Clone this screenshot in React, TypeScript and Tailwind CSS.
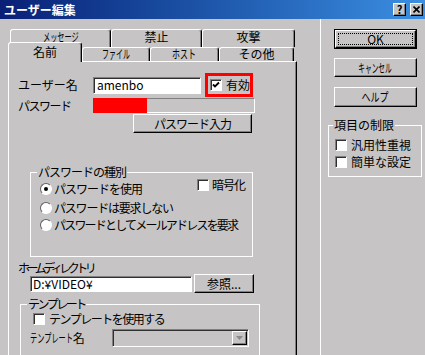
import React from 'react';

const raised =
  'border border-t-white border-l-white border-r-black border-b-black shadow-[inset_-1px_-1px_0_#808080] bg-[#c6c4c4]';
const sunken =
  'border border-t-[#808080] border-l-[#808080] border-r-white border-b-white shadow-[inset_1px_1px_0_#303030]';

// 半角カナ風の細い文字
const Narrow = ({ children, className = '' }: { children: React.ReactNode; className?: string }) => (
  <span className={`inline-block whitespace-nowrap ${className}`}>{children}</span>
);

const CheckBox = ({ checked = false }: { checked?: boolean }) => (
  <span className={`w-[12px] h-[12px] shrink-0 bg-white flex items-center justify-center ${sunken}`}>
    {checked && (
      <svg width="8" height="8" viewBox="0 0 8 8">
        <path d="M1 3.5 L3 5.5 L7 1.5" stroke="#000" strokeWidth="1.8" fill="none" />
      </svg>
    )}
  </span>
);

const Radio = ({ on = false }: { on?: boolean }) => (
  <span className="w-[12px] h-[12px] shrink-0 rounded-full bg-white border border-t-[#606060] border-l-[#606060] border-r-white border-b-white flex items-center justify-center">
    {on && <span className="w-[4px] h-[4px] rounded-full bg-black" />}
  </span>
);

const BackTab = ({ w, children }: { w: string; children: React.ReactNode }) => (
  <div
    className={`${w} h-[18px] bg-[#c6c4c4] border-t border-l border-r border-t-white border-l-white border-r-black rounded-t-[3px] shadow-[inset_-1px_0_0_#808080] flex justify-center`}
  >
    {children}
  </div>
);

const FrontTab = ({ w, children }: { w: string; children: React.ReactNode }) => (
  <div
    className={`${w} h-[14px] bg-[#c6c4c4] border-t border-l border-r border-t-white border-l-white border-r-black rounded-t-[3px] shadow-[inset_-1px_0_0_#808080] flex justify-center leading-[12px]`}
  >
    {children}
  </div>
);

export default function App() {
  return (
    <div className="w-[425px] h-[355px] overflow-hidden bg-[#c6c4c4] font-['Noto_Sans_CJK_JP',sans-serif] text-[12px] leading-[14px] text-black flex flex-col">
      {/* タイトルバー */}
      <div className="h-[19px] shrink-0 bg-linear-to-r from-[#0b1f76] to-[#3c8fe2] flex items-center pl-[4px] pr-[2px]">
        <span className="text-white font-bold">ユーザー編集</span>
        <div className="ml-auto flex gap-[4px]">
          <span className={`w-[13px] h-[13px] flex items-center justify-center text-[11px] leading-none font-bold ${raised}`}>?</span>
          <span className={`w-[13px] h-[13px] flex items-center justify-center ${raised}`}>
            <svg width="7" height="7" viewBox="0 0 7 7">
              <path d="M0.5 0.5 L6.5 6.5 M6.5 0.5 L0.5 6.5" stroke="#000" strokeWidth="1.6" />
            </svg>
          </span>
        </div>
      </div>

      <div className="flex flex-1 min-h-0">
        {/* 左側：タブ */}
        <div className="w-[321px] shrink-0 border-r border-white pl-[8px] pt-[10px] flex flex-col">
          <div className="flex h-[18px] pl-[2px]">
            <BackTab w="w-[101px]">
              <Narrow className="scale-x-[0.6]">メッセージ</Narrow>
            </BackTab>
            <BackTab w="w-[91px]">禁止</BackTab>
            <BackTab w="w-[93px]">攻撃</BackTab>
          </div>
          <div className="flex h-[14px] items-end">
            <div className="w-[74px] h-[20px] mb-[-1px] relative z-10 bg-[#c6c4c4] border-t border-l border-r border-t-white border-l-white border-r-black rounded-t-[3px] shadow-[inset_-1px_0_0_#808080] flex justify-center pt-[2px]">
              名前
            </div>
            <FrontTab w="w-[68px]">
              <Narrow className="scale-x-[0.58]">ファイル</Narrow>
            </FrontTab>
            <FrontTab w="w-[69px]">
              <Narrow className="scale-x-[0.66]">ホスト</Narrow>
            </FrontTab>
            <FrontTab w="w-[75px]">その他</FrontTab>
          </div>

          <div className="w-[289px] h-[320px] shrink-0 border-t border-l border-r border-t-white border-l-white border-r-black shadow-[inset_-1px_0_0_#808080] flex flex-col">
            {/* ユーザー名 */}
            <div className="flex items-center h-[24px] mt-[11px]">
              <span className="ml-[9px] w-[75px]">ユーザー名</span>
              <div className={`w-[108px] h-[17px] bg-white flex items-center pl-[3px] ${sunken}`}>amenbo</div>
              <div className="ml-[4px] w-[48px] h-[24px] border-[3px] border-[#ff0000] flex items-center pl-[2px] gap-[4px]">
                <CheckBox checked />
                <span>有効</span>
              </div>
            </div>

            {/* パスワード */}
            <div className="flex items-center h-[15px] mt-[1px]">
              <span className="ml-[9px] w-[75px] tracking-[-1.5px]">パスワード</span>
              <div className="w-[162px] h-[15px] flex border-t border-r border-b border-t-[#808080] border-r-white border-b-white">
                <div className="w-[54px] -mt-[1px] h-[15px] bg-[#ff0000]" />
              </div>
            </div>

            <div className={`ml-[124px] mt-[1px] w-[119px] h-[19px] flex items-center justify-center tracking-[-1px] ${raised}`}>
              パスワード入力
            </div>

            {/* パスワードの種別 */}
            <fieldset className="ml-[21px] mt-[32px] w-[223px] min-w-0 border border-white pl-[6px] pr-[7px] pb-[23px]">
              <legend className="px-[1px] tracking-[-1px]">パスワードの種別</legend>
              <div className="flex justify-between h-[18px] ml-[3px]">
                <label className="self-end h-[16px] flex items-center gap-[2px] tracking-[-1px]">
                  <Radio on />
                  <span>パスワードを使用</span>
                </label>
                <label className="self-start -mt-[1px] h-[14px] flex items-center gap-[3px] tracking-[-1px]">
                  <CheckBox />
                  <span>暗号化</span>
                </label>
              </div>
              <label className="mt-[3px] ml-[3px] h-[16px] flex items-center gap-[2px] tracking-[-1.2px]">
                <Radio />
                <span>パスワードは要求しない</span>
              </label>
              <label className="mt-[1px] ml-[3px] h-[16px] flex items-center gap-[2px] whitespace-nowrap tracking-[-1.8px]">
                <Radio />
                <span>パスワードとしてメールアドレスを要求</span>
              </label>
            </fieldset>

            {/* ホームディレクトリ */}
            <span className="ml-[9px] mt-[5px] leading-[12px] tracking-[-3.5px]">ホームディレクトリ</span>
            <div className="flex items-center h-[19px] ml-[21px] gap-[2px]">
              <div className={`w-[162px] h-[16px] bg-white flex items-center pl-[2px] ${sunken}`}>D:¥VIDEO¥</div>
              <div className={`w-[60px] h-[19px] flex items-center justify-center ${raised}`}>参照...</div>
            </div>

            {/* テンプレート */}
            <fieldset className="ml-[11px] mt-[4px] w-[240px] min-w-0 border border-white pl-[6px] pb-[10px]">
              <legend className="px-[1px] tracking-[-2.5px]">テンプレート</legend>
              <label className="mt-[1px] ml-[6px] h-[14px] flex items-center gap-[4px] tracking-[-1.5px]">
                <CheckBox />
                <span>テンプレートを使用する</span>
              </label>
              <div className="mt-[3px] h-[18px] flex items-center">
                <span className="ml-[3px] w-[82px] flex">
                  <Narrow className="scale-x-[0.6] origin-left">テンプレート</Narrow>
                  <span className="-ml-[29px]">名</span>
                </span>
                <div className={`w-[137px] h-[18px] bg-[#c6c4c4] flex items-center justify-end pr-[1px] ${sunken}`}>
                  <div className={`w-[15px] h-[14px] flex items-center justify-center ${raised}`}>
                    <svg width="7" height="4" viewBox="0 0 7 4">
                      <path d="M0 0 H7 L3.5 4 Z" fill="#8a8a8a" />
                    </svg>
                  </div>
                </div>
              </div>
            </fieldset>
          </div>
        </div>

        {/* 右側：ボタン */}
        <div className="flex-1 pl-[13px] pt-[10px] flex flex-col">
          <div className="w-[83px] h-[20px] border border-black flex">
            <div className={`flex-1 flex p-[2px] ${raised}`}>
              <div className="flex-1 border border-dotted border-black flex items-center justify-center leading-none">OK</div>
            </div>
          </div>
          <div className={`mt-[9px] w-[83px] h-[19px] flex items-center justify-center ${raised}`}>
            <Narrow className="scale-x-[0.56]">キャンセル</Narrow>
          </div>
          <div className={`mt-[10px] w-[83px] h-[20px] flex items-center justify-center ${raised}`}>
            <Narrow className="scale-x-[0.75]">ヘルプ</Narrow>
          </div>

          <fieldset className="-ml-[6px] mt-[11px] w-[94px] min-w-0 border border-white pl-[6px] pb-[7px]">
            <legend className="-ml-[2px] px-[1px]">項目の制限</legend>
            <label className="mt-[6px] h-[14px] flex items-center gap-[4px] whitespace-nowrap">
              <CheckBox />
              <span>汎用性重視</span>
            </label>
            <label className="mt-[3px] h-[14px] flex items-center gap-[4px] whitespace-nowrap">
              <CheckBox />
              <span>簡単な設定</span>
            </label>
          </fieldset>
        </div>
      </div>
    </div>
  );
}
